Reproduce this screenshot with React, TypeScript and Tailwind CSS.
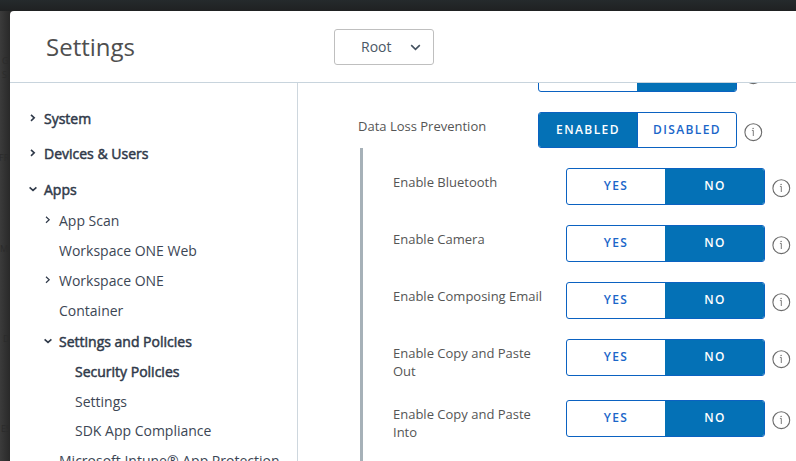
import { clsx } from "clsx";

type NavItem = {
  label: string;
  height: string;
  indent: string;
  arrow?: "right" | "down";
  strong?: boolean;
};

const navItems: NavItem[] = [
  { label: "System", height: "h-[35px]", indent: "pl-[19px]", arrow: "right", strong: true },
  { label: "Devices & Users", height: "h-9", indent: "pl-[19px]", arrow: "right", strong: true },
  { label: "Apps", height: "h-[31px]", indent: "pl-[19px]", arrow: "down", strong: true },
  { label: "App Scan", height: "h-[30px]", indent: "pl-[34px]", arrow: "right" },
  { label: "Workspace ONE Web", height: "h-[30px]", indent: "pl-[34px]" },
  { label: "Workspace ONE", height: "h-[30px]", indent: "pl-[34px]", arrow: "right" },
  { label: "Container", height: "h-[31px]", indent: "pl-[34px]" },
  { label: "Settings and Policies", height: "h-[30px]", indent: "pl-[34px]", arrow: "down", strong: true },
  { label: "Security Policies", height: "h-[30px]", indent: "pl-[50px]", strong: true },
  { label: "Settings", height: "h-[29px]", indent: "pl-[50px]" },
  { label: "SDK App Compliance", height: "h-[30px]", indent: "pl-[50px]" },
  { label: "Microsoft Intune® App Protection", height: "h-[30px]", indent: "pl-[34px]" },
];

const policies = [
  { label: "Enable Bluetooth", height: "h-[57px]" },
  { label: "Enable Camera", height: "h-[57px]" },
  { label: "Enable Composing Email", height: "h-[57px]" },
  { label: "Enable Copy and Paste Out", height: "h-[61px]" },
  { label: "Enable Copy and Paste Into", height: "h-[61px]" },
];

function Arrow({ dir, strong }: { dir: "right" | "down"; strong?: boolean }) {
  return (
    <svg width="8" height="8" viewBox="0 0 8 8" fill="none" stroke="#303a4a" strokeWidth={strong ? 1.6 : 1.2}>
      <path d={dir === "right" ? "M2 0.8 L5.2 3.8 L2 6.8" : "M0.6 2.3 L4 5.4 L7.4 2.3"} />
    </svg>
  );
}

function InfoIcon() {
  return (
    <svg className="shrink-0" width="20" height="20" viewBox="0 0 20 20" fill="none" stroke="#6c6c6c">
      <circle cx="10.3" cy="10.2" r="8.4" strokeWidth="1.1" />
      <path d="M8.9 8.4 H10.3 V14" strokeWidth="0.9" />
      <circle cx="10.1" cy="6.4" r="0.7" fill="#6c6c6c" stroke="none" />
    </svg>
  );
}

function Toggle({ left, right, active, height }: { left: string; right: string; active: "left" | "right"; height: string }) {
  const cell = "flex items-center justify-center text-[12px] font-semibold tracking-[1.4px] pb-px";
  return (
    <div className={clsx("flex w-[199px] shrink-0 overflow-hidden rounded-[3px] border border-[#0b62c1]", height)}>
      <div className={clsx(cell, "w-[98px]", active === "left" ? "bg-[#0471b6] text-white" : "text-[#1a66c9]")}>{left}</div>
      <div className={clsx(cell, "flex-1", active === "right" ? "bg-[#0471b6] pl-px text-white" : "border-l border-[#0b62c1] text-[#1a66c9]")}>{right}</div>
    </div>
  );
}

export default function App() {
  return (
    <div className="flex h-[461px] w-[796px] flex-col overflow-hidden bg-[#353535] font-['Open_Sans',sans-serif]">
      <div className="h-[11px] shrink-0 bg-linear-to-b from-[#252a2c] to-[#1f2122]" />
      <div className="flex min-h-0 flex-1">
        <div className="relative w-[10px] shrink-0 overflow-hidden bg-linear-to-r from-[#3b3b3b] to-[#292929] text-[9px] leading-[14px] text-[#2b2b2b]">
          <span className="absolute top-[43px] left-[2px]">G</span>
          <span className="absolute top-[57px] left-[2px]">S</span>
          <span className="absolute top-[140px] -left-px">FR</span>
          <span className="absolute top-[231px] left-0">MO</span>
          <span className="absolute top-[321px] left-[3px]">D</span>
          <span className="absolute top-[411px] left-px">ES</span>
        </div>
        <div className="flex min-w-0 flex-1 flex-col overflow-hidden rounded-tl-[4px] bg-white">
          <header className="flex h-[72px] shrink-0 border-b border-[#c8d4dd]">
            <h1 className="w-[324px] pt-[19px] pl-9 text-[24px] leading-[34px] text-[#4f4f4f]">Settings</h1>
            <div className="mt-[18px] flex h-9 w-[100px] items-center justify-between rounded-[3px] border border-[#bfbfbf] pr-3 pl-[26px] text-[14px] text-[#4a5866]">
              <span className="pb-px">Root</span>
              <svg width="11" height="8" viewBox="0 0 11 8" fill="none" stroke="#43515f" strokeWidth="1.6">
                <path d="M1.2 2.2 L5.5 6.3 L9.8 2.2" />
              </svg>
            </div>
          </header>
          <div className="flex min-h-0 flex-1">
            <nav className="w-[288px] shrink-0 overflow-hidden border-r border-[#ced7de] pt-[26px] text-[14px] leading-5 text-[#3c4654]">
              {navItems.map((item) => (
                <div key={item.label} className={clsx("flex", item.height, item.indent)}>
                  <span className="w-[15px] shrink-0 pt-[5px]">{item.arrow && <Arrow dir={item.arrow} strong={item.strong} />}</span>
                  <span className={clsx("whitespace-nowrap", item.strong && "text-[#303a4a] [-webkit-text-stroke:0.5px_#303a4a]")}>{item.label}</span>
                </div>
              ))}
            </nav>
            <main className="min-w-0 flex-1 overflow-hidden pl-[60px] text-[13px] leading-[18px] text-[#555]">
              <div className="flex h-[29px] items-end overflow-hidden">
                <div className="-mt-7 mb-5 ml-[180px]">
                  <Toggle left="" right="" active="right" height="h-[37px]" />
                </div>
                <div className="mb-[27px] ml-[6px]"><InfoIcon /></div>
              </div>
              <div className="flex h-9">
                <div className="w-[180px] shrink-0 pt-[5px]">Data Loss Prevention</div>
                <Toggle left="ENABLED" right="DISABLED" active="left" height="h-9" />
                <div className="mt-[10px] ml-[6px]"><InfoIcon /></div>
              </div>
              <div className="ml-[2px] h-[330px] border-l-[3px] border-[#a6b1b8] pt-5">
                {policies.map((p) => (
                  <div key={p.label} className={clsx("flex pl-[30px]", p.height)}>
                    <div className="w-[173px] shrink-0 pt-[5px] pr-5">{p.label}</div>
                    <Toggle left="YES" right="NO" active="right" height="h-[37px]" />
                    <div className="mt-[10px] ml-[6px]"><InfoIcon /></div>
                  </div>
                ))}
              </div>
            </main>
          </div>
        </div>
      </div>
    </div>
  );
}
